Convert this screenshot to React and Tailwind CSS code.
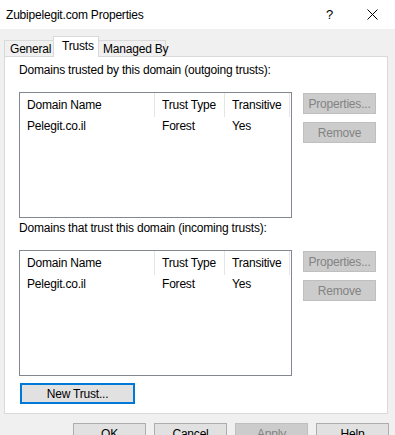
import React from "react";

const font = { fontFamily: '"Liberation Sans", Arial, sans-serif' };

function Btn({ children, disabled, focused, className = "" }) {
  let tone = "bg-[#e1e1e1] border border-[#adadad] text-black";
  if (disabled) tone = "bg-[#cccccc] border border-[#bfbfbf] text-[#838383]";
  if (focused) tone = "bg-[#e1e1e1] border-2 border-[#0078d7] text-black";
  return (
    <div className={`h-[21px] w-[73px] shrink-0 flex items-center justify-center text-[12px] leading-none whitespace-nowrap ${tone} ${className}`}>
      {children}
    </div>
  );
}

function TrustList({ rows }) {
  return (
    <div className="w-[273px] h-[126px] border border-[#828790] bg-white">
      <div className="flex h-[24px] text-[12px] text-black whitespace-nowrap">
        <div className="w-[135px] pl-[7px] flex items-center border-r border-[#e5e5e5]">Domain Name</div>
        <div className="w-[70px] pl-[7px] flex items-center border-r border-[#e5e5e5]">Trust Type</div>
        <div className="w-[65px] pl-[7px] flex items-center border-r border-[#e5e5e5]">Transitive</div>
      </div>
      {rows.map((r) => (
        <div key={r.name} className="flex h-[18px] text-[12px] text-black items-center">
          <div className="w-[135px] pl-[7px]">{r.name}</div>
          <div className="w-[70px] pl-[7px]">{r.type}</div>
          <div className="w-[65px] pl-[7px]">{r.transitive}</div>
        </div>
      ))}
    </div>
  );
}

function TrustSection({ label }) {
  const rows = [{ name: "Pelegit.co.il", type: "Forest", transitive: "Yes" }];
  return (
    <div className="flex flex-col">
      <div className="text-[12px] h-[16px] leading-[16px] text-black whitespace-nowrap">{label}</div>
      <div className="flex mt-[14px] gap-[11px]">
        <TrustList rows={rows} />
        <div className="flex flex-col gap-[8px] pt-[1px]">
          <Btn disabled>Properties...</Btn>
          <Btn disabled>Remove</Btn>
        </div>
      </div>
    </div>
  );
}

export default function App() {
  return (
    <div className="w-[395px] h-[435px] bg-[#f0f0f0] overflow-hidden flex flex-col tracking-[-0.2px]" style={font}>
      {/* title bar */}
      <div className="h-[29px] bg-white flex items-center shrink-0">
        <div className="pl-[6px] text-[12px] text-black flex-1 whitespace-nowrap">Zubipelegit.com Properties</div>
        <div className="w-[12px] text-[13px] text-black mr-[29px]">?</div>
        <svg width="11" height="11" viewBox="0 0 11 11" className="mr-[17px]">
          <path d="M0.5 0.5 L10.5 10.5 M10.5 0.5 L0.5 10.5" stroke="#000" strokeWidth="1" fill="none" />
        </svg>
      </div>

      {/* tabs */}
      <div className="h-[27px] flex items-end pl-[4px] shrink-0 whitespace-nowrap">
        <div className="h-[16px] w-[50px] border border-b-0 border-[#d9d9d9] bg-[#f0f0f0] text-[12px] flex items-center pl-[5px] leading-none">
          General
        </div>
        <div className="h-[21px] w-[46px] -ml-px border border-b-0 border-[#d9d9d9] bg-white text-[12px] flex items-start pt-[3px] pl-[8px] leading-none relative z-10 -mb-px">
          Trusts
        </div>
        <div className="h-[16px] w-[68px] -ml-px border border-b-0 border-[#d9d9d9] bg-[#f0f0f0] text-[12px] flex items-center pl-[4px] leading-none">
          Managed By
        </div>
      </div>

      {/* panel */}
      <div className="ml-[4px] w-[384px] h-[358px] border border-[#d9d9d9] bg-white pl-[14px] pt-[5px] flex flex-col shrink-0">
        <TrustSection label="Domains trusted by this domain (outgoing trusts):" />
        <div className="mt-[2px]">
          <TrustSection label="Domains that trust this domain (incoming trusts):" />
        </div>
        <Btn focused className="mt-[7px] ml-px !w-[115px]">New Trust...</Btn>
      </div>

      {/* dialog buttons */}
      <div className="flex justify-end gap-[8px] pr-[6px] mt-[9px] shrink-0">
        <Btn>OK</Btn>
        <Btn>Cancel</Btn>
        <Btn disabled>Apply</Btn>
        <Btn>Help</Btn>
      </div>
    </div>
  );
}
